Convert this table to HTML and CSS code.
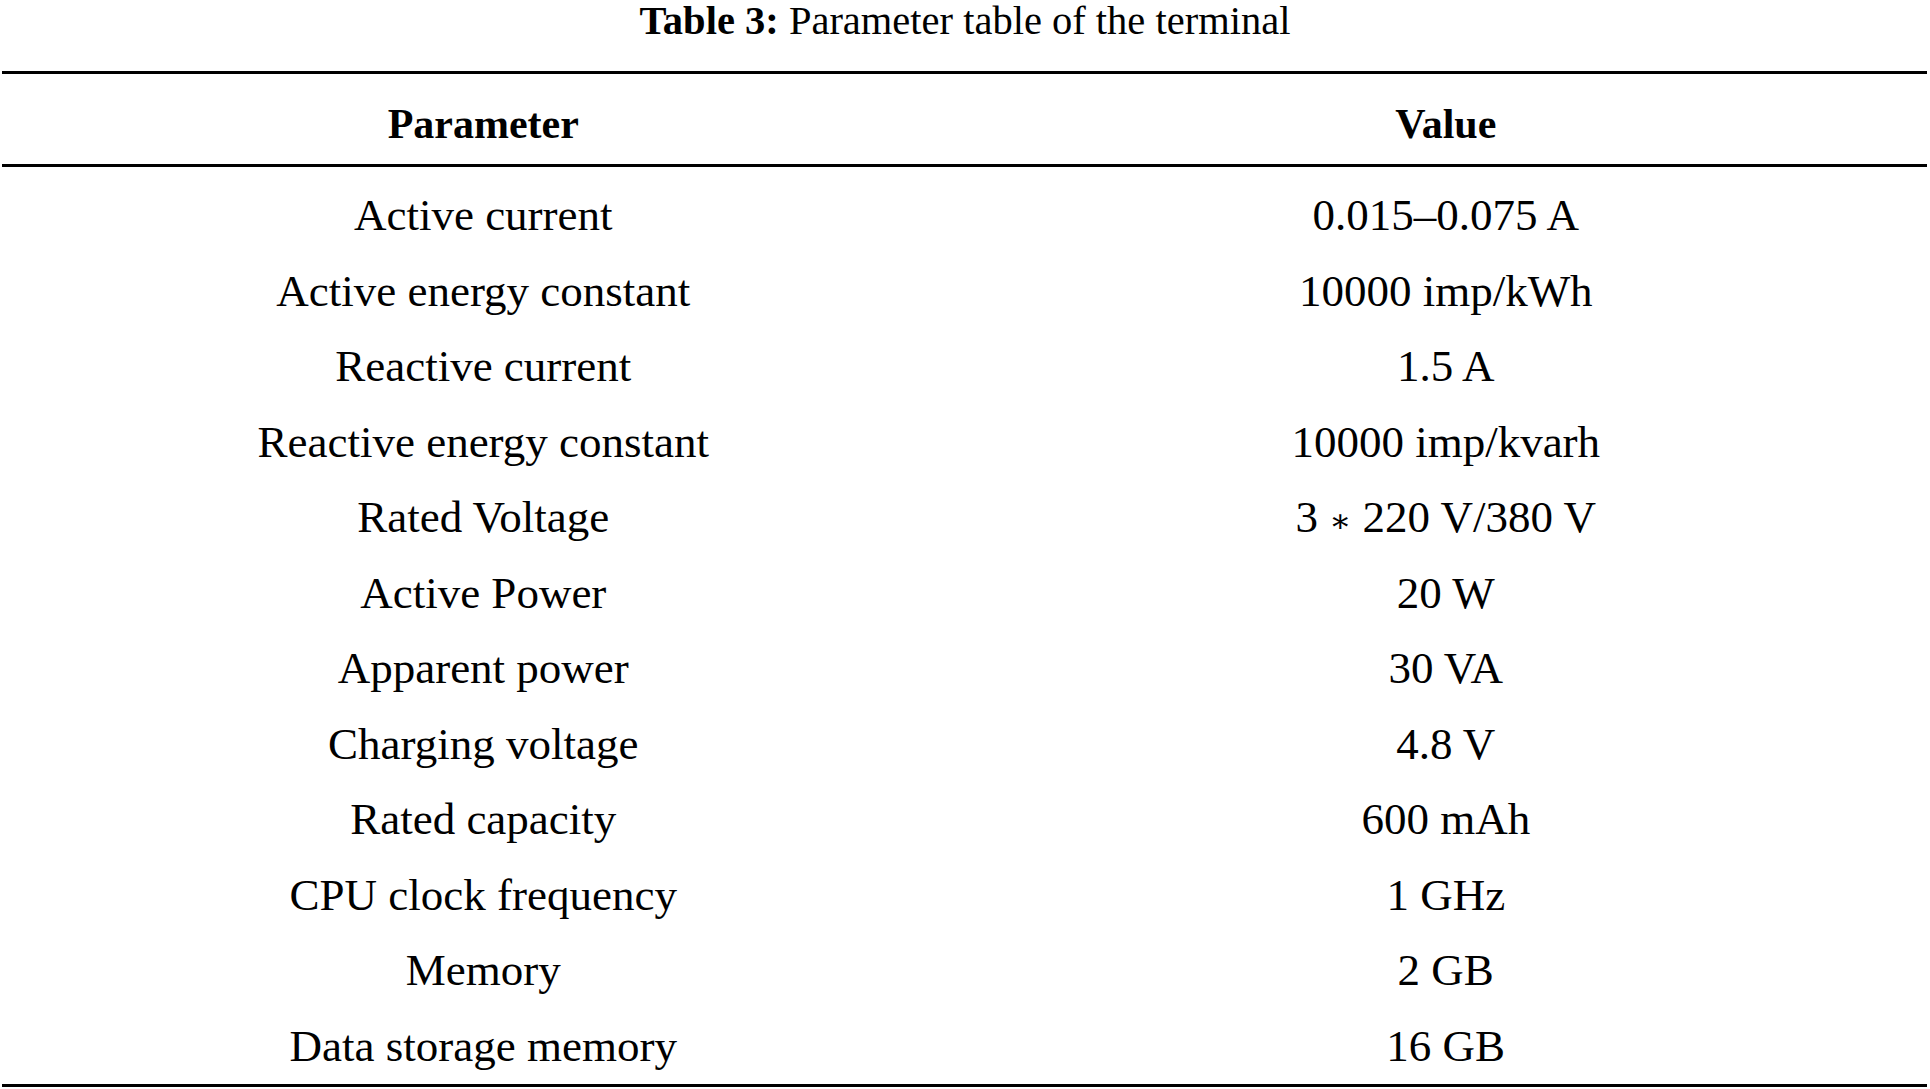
FILE: index.html
```html
<!DOCTYPE html>
<html>
<head>
<meta charset="utf-8">
<link rel="stylesheet" href="styles.css">
</head>
<body>
<div class="caption"><b>Table 3:</b> Parameter table of the terminal</div>
<table class="params">
<thead>
<tr><th>Parameter</th><th>Value</th></tr>
</thead>
<tbody>
<tr class="first"><td>Active current</td><td>0.015–0.075 A</td></tr>
<tr><td>Active energy constant</td><td>10000 imp/kWh</td></tr>
<tr><td>Reactive current</td><td>1.5 A</td></tr>
<tr><td>Reactive energy constant</td><td>10000 imp/kvarh</td></tr>
<tr><td>Rated Voltage</td><td>3 <span class="op">∗</span> 220 V/380 V</td></tr>
<tr><td>Active Power</td><td>20 W</td></tr>
<tr><td>Apparent power</td><td>30 VA</td></tr>
<tr><td>Charging voltage</td><td>4.8 V</td></tr>
<tr><td>Rated capacity</td><td>600 mAh</td></tr>
<tr><td>CPU clock frequency</td><td>1 GHz</td></tr>
<tr><td>Memory</td><td>2 GB</td></tr>
<tr class="last"><td>Data storage memory</td><td>16 GB</td></tr>
</tbody>
</table>
</body>
</html>
```
FILE: styles.css
```css
html, body {
  margin: 0;
  padding: 0;
  background: #ffffff;
  color: #000000;
  font-family: "Liberation Serif", "Times New Roman", serif;
}
.caption {
  text-align: center;
  font-size: 40.5px;
  line-height: 41px;
  margin-bottom: 30px;
}
.caption b {
  font-weight: bold;
}
.params {
  margin-left: 2px;
  width: 1925px;
  border-collapse: collapse;
  table-layout: fixed;
}
.params th {
  width: 50%;
  font-size: 42px;
  font-weight: bold;
  line-height: 79px;
  padding: 11px 0 0 0;
  text-align: center;
  border-top: 3px solid #000;
  border-bottom: 3px solid #000;
}
.params td {
  font-size: 45px;
  line-height: 75.5px;
  height: 75.5px;
  padding: 0;
  text-align: center;
}
.params .op {
  font-family: "DejaVu Serif", serif;
  font-size: 0.72em;
  font-weight: normal;
  line-height: 0;
}
.params tr.first td {
  padding-top: 11px;
}
.params tr.last td {
  padding-bottom: 0;
  border-bottom: 3px solid #000;
}
```
